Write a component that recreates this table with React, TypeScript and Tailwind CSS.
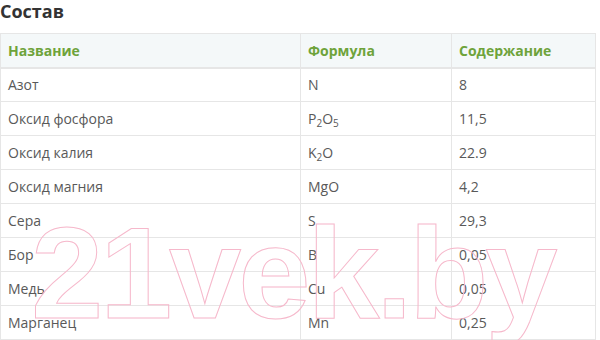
import React from 'react';

type Row = { name: string; formula: React.ReactNode; value: string };

const rows: Row[] = [
  { name: 'Азот', formula: 'N', value: '8' },
  {
    name: 'Оксид фосфора',
    formula: (
      <>
        P<sub className="text-[10px]">2</sub>O<sub className="text-[10px]">5</sub>
      </>
    ),
    value: '11,5',
  },
  {
    name: 'Оксид калия',
    formula: (
      <>
        K<sub className="text-[10px]">2</sub>O
      </>
    ),
    value: '22.9',
  },
  { name: 'Оксид магния', formula: 'MgO', value: '4,2' },
  { name: 'Сера', formula: 'S', value: '29,3' },
  { name: 'Бор', formula: 'B', value: '0,05' },
  { name: 'Медь', formula: 'Cu', value: '0,05' },
  { name: 'Марганец', formula: 'Mn', value: '0,25' },
];

export default function App() {
  return (
    <div className="relative w-[600px] h-[340px] overflow-hidden bg-white font-['Open_Sans',sans-serif]">
      <h2 className="text-[18px] font-bold text-[#333] leading-[22px] h-[33px]">Состав</h2>

      <table className="w-[596px] border-collapse text-[14px] text-[#595959]">
        <thead>
          <tr className="bg-[#f4f8f9] h-[34px]">
            <th className="w-[300px] border border-[#e6e6e6] border-b-2 px-[7px] text-left font-bold text-[#6ea33b]">Название</th>
            <th className="w-[151px] border border-[#e6e6e6] border-b-2 px-[7px] text-left font-bold text-[#6ea33b]">Формула</th>
            <th className="border border-[#e6e6e6] border-b-2 px-[7px] text-left font-bold text-[#6ea33b]">Содержание</th>
          </tr>
        </thead>
        <tbody>
          {rows.map((r) => (
            <tr key={r.name} className="h-[34px]">
              <td className="border border-[#e6e6e6] px-[7px]">{r.name}</td>
              <td className="border border-[#e6e6e6] px-[7px]">{r.formula}</td>
              <td className="border border-[#e6e6e6] px-[7px]">{r.value}</td>
            </tr>
          ))}
        </tbody>
      </table>

      {/* watermark */}
      <div
        aria-hidden="true"
        className="pointer-events-none select-none absolute left-[31px] top-[208px] font-['Liberation_Sans',Arial,sans-serif] font-bold text-[130px] leading-none tracking-[-0.025em] text-transparent [-webkit-text-stroke:1px_#f6b8cb]"
      >
        21vek.by
      </div>
    </div>
  );
}
